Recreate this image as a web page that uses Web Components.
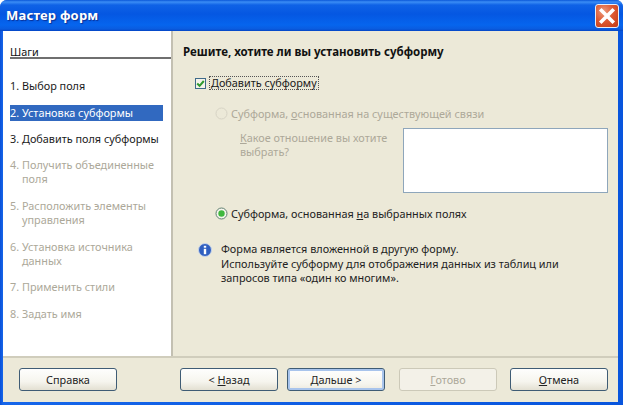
<!DOCTYPE html>
<html lang="ru">
<head>
<meta charset="utf-8">
<title>Мастер форм</title>
<style>
  html, body { margin: 0; padding: 0; }
  body { width: 623px; height: 405px; overflow: hidden; font: 10.85px "Noto Sans", "Open Sans", sans-serif; color: #1a1a1a; }
</style>
</head>
<body>
<wizard-window heading="Мастер форм">
  <step-list slot="steps" title-text="Шаги">
    <step-item number="1." style="--top:19px">Выбор поля</step-item>
    <step-item number="2." state="active" style="--top:11px">Установка субформы</step-item>
    <step-item number="3." style="--top:10px">Добавить поля субформы</step-item>
    <step-item number="4." state="off" style="--top:10px">Получить объединенные поля</step-item>
    <step-item number="5." state="off" style="--top:11px">Расположить элементы управления</step-item>
    <step-item number="6." state="off" style="--top:11px">Установка источника данных</step-item>
    <step-item number="7." state="off" style="--top:10px">Применить стили</step-item>
    <step-item number="8." state="off" style="--top:11px">Задать имя</step-item>
  </step-list>
  <subform-page slot="page"></subform-page>
  <wizard-button slot="help" label="Справка"></wizard-button>
  <wizard-button slot="nav" label="&lt; Назад" mnemonic="Н"></wizard-button>
  <wizard-button slot="nav" label="Дальше &gt;" mnemonic="Д" state="default"></wizard-button>
  <wizard-button slot="nav" label="Готово" mnemonic="Г" state="disabled"></wizard-button>
  <wizard-button slot="nav" label="Отмена" mnemonic="О"></wizard-button>
</wizard-window>

<script>
// underline the mnemonic letter, only where it starts a word
function underlineFirst(text, ch) {
    const safe = text.replace(/&/g, "&amp;").replace(/</g, "&lt;").replace(/>/g, "&gt;");
    if (!ch) return safe;
    return safe.replace(new RegExp(`(^|\\s)${ch}`), `$1<u>${ch}</u>`);
}

class WizardWindow extends HTMLElement {
    constructor() {
        super();
        this.shadowDOM = this.attachShadow({mode: "open"});
    }

    connectedCallback() {
        this.shadowDOM.innerHTML = `
        <style>
        * { box-sizing: border-box; }
        :host {
            display: flex;
            flex-direction: column;
            width: 623px;
            height: 405px;
            background: linear-gradient(90deg, #0a50d8 0, #1666ea 3px, #0855dd 623px);
            border-radius: 7px 7px 0 0;
            overflow: hidden;
        }
        .title {
            height: 31px;
            flex: none;
            display: flex;
            align-items: center;
            justify-content: space-between;
            padding: 0 4px 1px 6px;
            background: linear-gradient(180deg, #0a57d8 0, #3b8df5 2px, #0f62e6 5px, #0557e2 14px, #0665ee 25px, #0a5ce0 29px, #0445c4 31px);
            color: #fff;
            font: bold 13px "Noto Sans", sans-serif;
            letter-spacing: .2px;
            text-shadow: 1px 1px 1px #0a2f94;
        }
        .close {
            width: 24px;
            height: 24px;
            margin-top: 1px;
            border-radius: 3px;
            border: 1px solid #e8eef8;
            background: radial-gradient(circle at 35% 30%, #ec9a7c 0, #de5a33 45%, #c23a14 100%);
            display: block;
        }
        .body {
            flex: 1;
            display: flex;
            min-height: 0;
            margin: 0 5px 0 3px;
            background: #ece9d8;
        }
        .steps { width: 170px; flex: none; background: #fff; border-right: 2px solid #c3c0b2; }
        .page { flex: 1; min-width: 0; }
        .foot {
            flex: none;
            height: 46px;
            margin: 0 5px 3px 3px;
            padding: 10px 0 0 16px;
            background: #ece9d8;
            border-top: 2px solid #d0cdbc;
            display: flex;
            justify-content: space-between;
        }
        .nav { display: flex; padding-right: 10px; }
        </style>
        <div class="title">
            <span>${this.getAttribute("heading")}</span>
            <svg class="close" viewBox="0 0 22 22">
                <path d="M5.5 5.5 L16.5 16.5 M16.5 5.5 L5.5 16.5" stroke="#fff" stroke-width="3.6" stroke-linecap="square" fill="none"/>
            </svg>
        </div>
        <div class="body">
            <div class="steps"><slot name="steps"></slot></div>
            <div class="page"><slot name="page"></slot></div>
        </div>
        <div class="foot">
            <slot name="help"></slot>
            <div class="nav"><slot name="nav"></slot></div>
        </div>`;
    }
}
customElements.define("wizard-window", WizardWindow);

class StepList extends HTMLElement {
    constructor() {
        super();
        this.shadowDOM = this.attachShadow({mode: "open"});
    }

    connectedCallback() {
        this.shadowDOM.innerHTML = `
        <style>
        :host { display: block; padding: 13px 0 0 7px; }
        h2 {
            box-sizing: border-box;
            margin: 0;
            height: 15px;
            font: inherit;
            line-height: 16px;
            color: #111;
            border-bottom: 2px solid #6f6f6f;
        }
        </style>
        <h2>${this.getAttribute("title-text")}</h2>
        <slot></slot>`;
    }
}
customElements.define("step-list", StepList);

class StepItem extends HTMLElement {
    constructor() {
        super();
        this.shadowDOM = this.attachShadow({mode: "open"});
    }

    connectedCallback() {
        this.shadowDOM.innerHTML = `
        <style>
        :host {
            display: block;
            width: 153px;
            margin-top: var(--top, 10px);
            color: #1a1a1a;
            line-height: 14px;
        }
        :host([state="off"]) { color: #aca899; }
        .row { display: flex; padding: 1px 0; }
        :host([state="active"]) .row { background: #3169c0; color: #fff; }
        .num { flex: none; width: 12px; }
        </style>
        <div class="row">
            <span class="num">${this.getAttribute("number")}</span>
            <span><slot></slot></span>
        </div>`;
    }
}
customElements.define("step-item", StepItem);

class WizardButton extends HTMLElement {
    constructor() {
        super();
        this.shadowDOM = this.attachShadow({mode: "open"});
    }

    connectedCallback() {
        const label = this.getAttribute("label");
        this.shadowDOM.innerHTML = `
        <style>
        * { box-sizing: border-box; }
        :host { display: block; width: 98px; height: 23px; margin-left: 14px; }
        :host([slot="help"]) { margin-left: 0; }
        :host([state="default"]) { margin-left: 9px; }
        :host(:last-child) { margin-left: 13px; }
        .btn {
            height: 100%;
            display: flex;
            align-items: center;
            justify-content: center;
            border: 1px solid #3f5c75;
            border-radius: 3px;
            background: linear-gradient(180deg, #fefefd 0, #f6f5ee 60%, #e3e0d2 100%);
            color: #222;
        }
        :host([state="default"]) .btn {
            background: linear-gradient(180deg, #fff 0, #f6f5ee 70%, #ece9de 100%);
            box-shadow: inset 0 0 0 2px #a8c4ec;
        }
        :host([state="disabled"]) .btn {
            border-color: #ccc9b8;
            background: #f3f1e8;
            color: #aca899;
        }
        </style>
        <div class="btn"><span>${underlineFirst(label, this.getAttribute("mnemonic"))}</span></div>`;
    }
}
customElements.define("wizard-button", WizardButton);

class CheckOption extends HTMLElement {
    constructor() {
        super();
        this.shadowDOM = this.attachShadow({mode: "open"});
    }

    connectedCallback() {
        this.shadowDOM.innerHTML = `
        <style>
        :host { display: flex; align-items: center; gap: 3px; height: 14px; }
        .box {
            flex: none;
            width: 9px;
            height: 9px;
            padding: 0;
            border: 1px solid #3f6a8a;
            background: #f4f3ea;
            display: block;
            box-sizing: content-box;
        }
        .text { border: 1px dotted #555; padding: 0 1px; line-height: 12px; }
        </style>
        <svg class="box" viewBox="0 0 9 9">
            <path d="M1.2 4.5 L3.6 6.8 L7.8 2" stroke="#2f9a2f" stroke-width="2" fill="none"/>
        </svg>
        <span class="text">${underlineFirst(this.getAttribute("label"), this.getAttribute("mnemonic"))}</span>`;
    }
}
customElements.define("check-option", CheckOption);

class RadioOption extends HTMLElement {
    constructor() {
        super();
        this.shadowDOM = this.attachShadow({mode: "open"});
    }

    connectedCallback() {
        const disabled = this.hasAttribute("disabled");
        this.shadowDOM.innerHTML = `
        <style>
        :host { display: flex; align-items: center; gap: 3px; height: 16px; color: #222; }
        :host([disabled]) { color: #aca899; }
        svg { flex: none; width: 13px; height: 13px; }
        </style>
        <svg viewBox="0 0 13 13">
            <circle cx="6.5" cy="6.5" r="5.5" fill="${disabled ? "#ece9d8" : "#f6f6ee"}" stroke="${disabled ? "#d6d3c4" : "#5f7f70"}"/>
            ${this.hasAttribute("checked") ? '<circle cx="6.5" cy="6.5" r="3.2" fill="#3fb83f"/>' : ""}
        </svg>
        <span>${underlineFirst(this.getAttribute("label"), this.getAttribute("mnemonic"))}</span>`;
    }
}
customElements.define("radio-option", RadioOption);

class SubformPage extends HTMLElement {
    constructor() {
        super();
        this.shadowDOM = this.attachShadow({mode: "open"});
    }

    connectedCallback() {
        this.shadowDOM.innerHTML = `
        <style>
        * { box-sizing: border-box; }
        :host { display: block; padding: 13px 0 0 10px; }
        h1 { margin: 0; font: bold 11.5px/15px "Noto Sans", sans-serif; color: #111; }
        check-option { margin: 17px 0 0 12px; }
        .first { margin: 15px 0 0 32px; }
        .relation { display: flex; margin: 7px 0 0 57px; color: #aca899; line-height: 14px; }
        .question { width: 163px; padding-top: 3px; }
        .list { flex: none; width: 205px; height: 65px; background: #fff; border: 1px solid #8ea6bb; }
        .second { margin: 12px 0 0 32px; }
        .info { display: flex; margin: 21px 0 0 15px; color: #222; line-height: 14.5px; }
        .info svg { flex: none; width: 14px; height: 14px; margin: 1px 9px 0 0; }
        </style>
        <h1>Решите, хотите ли вы установить субформу</h1>
        <check-option label="Добавить субформу" mnemonic="Д"></check-option>
        <radio-option class="first" disabled label="Субформа, основанная на существующей связи" mnemonic="о"></radio-option>
        <div class="relation">
            <div class="question"><u>К</u>акое отношение вы хотите выбрать?</div>
            <div class="list"></div>
        </div>
        <radio-option class="second" checked label="Субформа, основанная на выбранных полях" mnemonic="н"></radio-option>
        <div class="info">
            <svg viewBox="0 0 14 14">
                <circle cx="7" cy="7" r="6.5" fill="#2f5fc0" stroke="#c6d3ea" stroke-width="1"/>
                <rect x="5.8" y="2.8" width="2.4" height="1.9" fill="#fff"/>
                <rect x="5.8" y="5.8" width="2.4" height="5.4" fill="#fff"/>
            </svg>
            <div>Форма является вложенной в другую форму.<br>Используйте субформу для отображения данных из таблиц или<br>запросов типа «один ко многим».</div>
        </div>`;
    }
}
customElements.define("subform-page", SubformPage);
</script>
</body>
</html>
